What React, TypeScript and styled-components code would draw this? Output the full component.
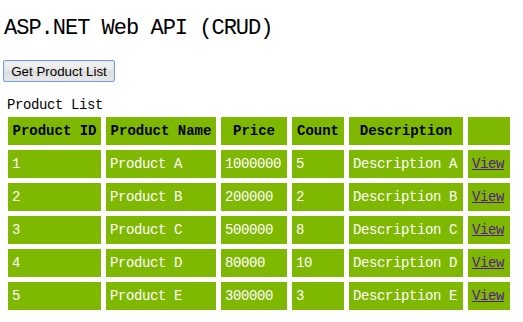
import React from 'react';
import styled, { createGlobalStyle } from 'styled-components';

interface Product {
  id: number;
  name: string;
  price: number;
  count: number;
  description: string;
}

interface Column {
  key: string;
  title: string;
  width: number;
}

const GREEN = '#7fb800';
const MONO = '"Liberation Mono", "DejaVu Sans Mono", monospace';

const columns: Column[] = [
  { key: 'id', title: 'Product ID', width: 93 },
  { key: 'name', title: 'Product Name', width: 110 },
  { key: 'price', title: 'Price', width: 66 },
  { key: 'count', title: 'Count', width: 52 },
  { key: 'description', title: 'Description', width: 114 },
  { key: 'view', title: '', width: 42 }
];

const products: Product[] = [
  { id: 1, name: 'Product A', price: 1000000, count: 5, description: 'Description A' },
  { id: 2, name: 'Product B', price: 200000, count: 2, description: 'Description B' },
  { id: 3, name: 'Product C', price: 500000, count: 8, description: 'Description C' },
  { id: 4, name: 'Product D', price: 80000, count: 10, description: 'Description D' },
  { id: 5, name: 'Product E', price: 300000, count: 3, description: 'Description E' }
];

const GlobalStyle = createGlobalStyle`
  html, body {
    margin: 0;
    padding: 0;
    background: #ffffff;
  }
`;

const Page = styled.div`
  padding: 0 3px;
  font-family: ${MONO};
  color: #000000;
`;

const Title = styled.h1`
  margin: 17px 0 0 1px;
  font-family: ${MONO};
  font-size: 22px;
  font-weight: normal;
  letter-spacing: -1px;
  line-height: 24px;
`;

const LoadButton = styled.button`
  display: block;
  margin-top: 19px;
  width: 112px;
  height: 22px;
  padding: 0;
  font-family: "Liberation Sans", Arial, sans-serif;
  font-size: 13.33px;
  color: #000000;
  border: 1px solid #7a9cc8;
  border-radius: 2px;
  background: linear-gradient(#f4f4f4, #e6e6e6 50%, #dcdcdc 51%, #e8e8e8);
  box-shadow: inset 0 0 0 1px #d8e6f6;
`;

const ProductTable = styled.table`
  margin-top: 14px;
  border-collapse: separate;
  border-spacing: 5px;
  table-layout: fixed;
  width: 512px;
  font-family: ${MONO};
  font-size: 14px;
  letter-spacing: -0.4px;
`;

const Caption = styled.caption`
  text-align: left;
  padding: 0 0 0 4px;
  height: 16px;
  line-height: 18px;
  caption-side: top;
`;

const HeadCell = styled.th<{ $width: number }>`
  box-sizing: border-box;
  width: ${(p) => p.$width}px;
  height: 28px;
  padding: 0 4px;
  background: ${GREEN};
  color: #000000;
  font-weight: bold;
  letter-spacing: 0;
  text-align: center;
  white-space: nowrap;
`;

const Cell = styled.td`
  box-sizing: border-box;
  height: 28px;
  padding: 0 4px;
  background: ${GREEN};
  color: #ffffff;
  text-align: left;
  white-space: nowrap;
`;

const ViewLink = styled.a`
  color: #551a8b;
  text-decoration: underline;
`;

function App(): JSX.Element {
  return (
    <>
      <GlobalStyle />
      <Page>
        <Title>ASP.NET Web API (CRUD)</Title>
        <LoadButton type="button">Get Product List</LoadButton>
        <ProductTable>
          <Caption>Product List</Caption>
          <thead>
            <tr>
              {columns.map((col) => (
                <HeadCell key={col.key} $width={col.width}>
                  {col.title}
                </HeadCell>
              ))}
            </tr>
          </thead>
          <tbody>
            {products.map((p) => (
              <tr key={p.id}>
                <Cell>{p.id}</Cell>
                <Cell>{p.name}</Cell>
                <Cell>{p.price}</Cell>
                <Cell>{p.count}</Cell>
                <Cell>{p.description}</Cell>
                <Cell>
                  <ViewLink href="#">View</ViewLink>
                </Cell>
              </tr>
            ))}
          </tbody>
        </ProductTable>
      </Page>
    </>
  );
}

export default App;
